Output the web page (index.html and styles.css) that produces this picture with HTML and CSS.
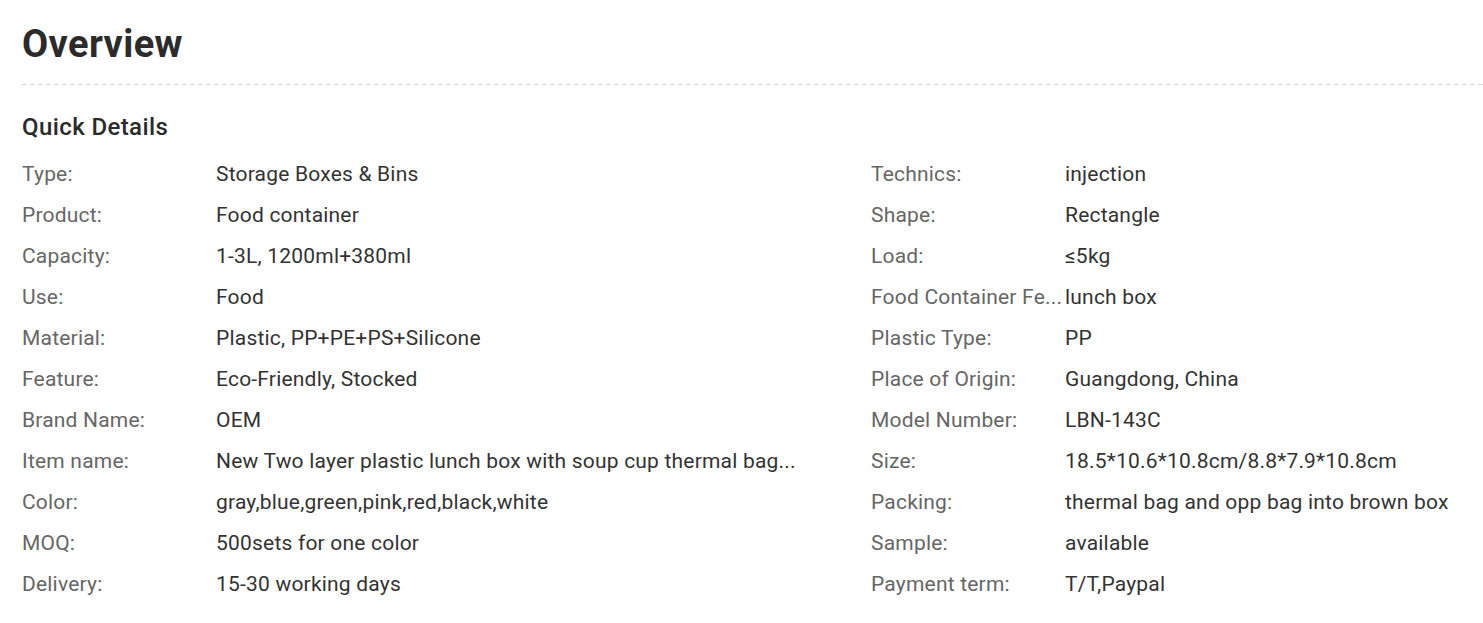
FILE: index.html
```html
<!DOCTYPE html>
<html lang="en">
<head>
<meta charset="utf-8">
<title>Overview</title>
<link rel="stylesheet" href="styles.css">
</head>
<body>
<div class="page">
  <h1 class="title">Overview</h1>
  <div class="divider"></div>
  <h2 class="subtitle">Quick Details</h2>
  <div class="details">
    <div class="col">
      <div class="row"><span class="label">Type:</span><span class="value">Storage Boxes &amp; Bins</span></div>
      <div class="row"><span class="label">Product:</span><span class="value">Food container</span></div>
      <div class="row"><span class="label">Capacity:</span><span class="value">1-3L, 1200ml+380ml</span></div>
      <div class="row"><span class="label">Use:</span><span class="value">Food</span></div>
      <div class="row"><span class="label">Material:</span><span class="value">Plastic, PP+PE+PS+Silicone</span></div>
      <div class="row"><span class="label">Feature:</span><span class="value">Eco-Friendly, Stocked</span></div>
      <div class="row"><span class="label">Brand Name:</span><span class="value">OEM</span></div>
      <div class="row"><span class="label">Item name:</span><span class="value">New Two layer plastic lunch box with soup cup thermal bag...</span></div>
      <div class="row"><span class="label">Color:</span><span class="value">gray,blue,green,pink,red,black,white</span></div>
      <div class="row"><span class="label">MOQ:</span><span class="value">500sets for one color</span></div>
      <div class="row"><span class="label">Delivery:</span><span class="value">15-30 working days</span></div>
    </div>
    <div class="col">
      <div class="row"><span class="label">Technics:</span><span class="value">injection</span></div>
      <div class="row"><span class="label">Shape:</span><span class="value">Rectangle</span></div>
      <div class="row"><span class="label">Load:</span><span class="value">≤5kg</span></div>
      <div class="row"><span class="label">Food Container Fe...</span><span class="value">lunch box</span></div>
      <div class="row"><span class="label">Plastic Type:</span><span class="value">PP</span></div>
      <div class="row"><span class="label">Place of Origin:</span><span class="value">Guangdong, China</span></div>
      <div class="row"><span class="label">Model Number:</span><span class="value">LBN-143C</span></div>
      <div class="row"><span class="label">Size:</span><span class="value">18.5*10.6*10.8cm/8.8*7.9*10.8cm</span></div>
      <div class="row"><span class="label">Packing:</span><span class="value">thermal bag and opp bag into brown box</span></div>
      <div class="row"><span class="label">Sample:</span><span class="value">available</span></div>
      <div class="row"><span class="label">Payment term:</span><span class="value">T/T,Paypal</span></div>
    </div>
  </div>
</div>
</body>
</html>
```

FILE: styles.css
```css
* { box-sizing: border-box; }
html, body { margin: 0; padding: 0; background: #fff; }
body {
  font-family: Roboto, "Liberation Sans", Arial, sans-serif;
  color: #333;
}
.page {
  padding: 18px 0 0 22px;
}
.title {
  margin: 0;
  font-size: 38px;
  line-height: 52px;
  font-weight: 700;
  letter-spacing: 0.4px;
  color: #2b2b2b;
}
.divider {
  margin-top: 14px;
  height: 1px;
  background: repeating-linear-gradient(to right, #d9d9d9 0 5px, transparent 5px 8px);
}
.subtitle {
  margin: 27px 0 0;
  font-size: 24px;
  line-height: 30px;
  font-weight: 500;
  letter-spacing: 0.4px;
  color: #2b2b2b;
}
.details {
  display: grid;
  grid-template-columns: 849px 1fr;
  margin-top: 12px;
}
.row {
  display: flex;
  height: 41px;
  line-height: 41px;
  font-size: 21px;
  letter-spacing: 0.2px;
  white-space: nowrap;
}
.label {
  width: 194px;
  flex: none;
  color: #666;
  overflow: hidden;
}
.value {
  color: #333;
}
```
